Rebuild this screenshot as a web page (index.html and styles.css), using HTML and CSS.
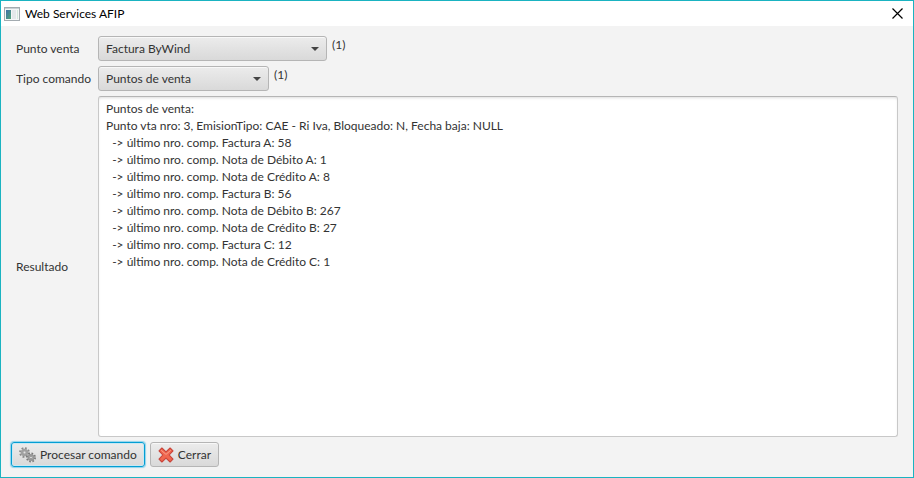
FILE: index.html
```
<!DOCTYPE html>
<html lang="es">
<head>
  <meta charset="UTF-8">
  <meta name="viewport" content="width=device-width, initial-scale=1.0">
  <title>Web Services AFIP</title>
  <link rel="stylesheet" href="styles.css">
</head>
<body>
  <div class="window">
    <header class="titlebar">
      <svg class="app-icon" width="16" height="14" viewBox="0 0 16 14">
        <defs>
          <linearGradient id="pane" x1="0" y1="0" x2="1" y2="1">
            <stop offset="0" stop-color="#3f6fa8"/>
            <stop offset="1" stop-color="#4fa578"/>
          </linearGradient>
        </defs>
        <rect x="0.5" y="0.5" width="15" height="13" fill="#f4f6f7" stroke="#a3abb0"/>
        <rect x="1" y="1" width="14" height="1" fill="#c9d0d4"/>
        <rect x="2" y="3" width="5" height="9" fill="url(#pane)"/>
        <rect x="8" y="3" width="4" height="9" fill="#e3e8ea"/>
        <rect x="13" y="3" width="1" height="9" fill="#d3e8dc"/>
      </svg>
      <h1 class="title">Web Services AFIP</h1>
      <button class="close" type="button" aria-label="Cerrar ventana">
        <svg width="11" height="11" viewBox="0 0 11 11">
          <path d="M0.5 0.5L10.5 10.5M10.5 0.5L0.5 10.5" stroke="#000" stroke-width="1.2"/>
        </svg>
      </button>
    </header>

    <form class="content">
      <div class="fields">
        <label for="puntoVenta">Punto venta</label>
        <div class="field">
          <div class="combo combo-wide">
            <select id="puntoVenta">
              <option>Factura ByWind</option>
            </select>
          </div>
          <span class="count">(1)</span>
        </div>

        <label for="tipoComando">Tipo comando</label>
        <div class="field">
          <div class="combo">
            <select id="tipoComando">
              <option>Puntos de venta</option>
            </select>
          </div>
          <span class="count">(1)</span>
        </div>

        <label for="resultado">Resultado</label>
        <textarea id="resultado" class="result" spellcheck="false">Puntos de venta:
Punto vta nro: 3, EmisionTipo: CAE - Ri Iva, Bloqueado: N, Fecha baja: NULL
  -&gt; último nro. comp. Factura A: 58
  -&gt; último nro. comp. Nota de Débito A: 1
  -&gt; último nro. comp. Nota de Crédito A: 8
  -&gt; último nro. comp. Factura B: 56
  -&gt; último nro. comp. Nota de Débito B: 267
  -&gt; último nro. comp. Nota de Crédito B: 27
  -&gt; último nro. comp. Factura C: 12
  -&gt; último nro. comp. Nota de Crédito C: 1</textarea>
      </div>

      <div class="actions">
        <button class="btn btn-default" type="button">
          <svg width="17" height="16" viewBox="0 0 17 16" fill="none">
            <circle cx="5.5" cy="5.5" r="4.4" stroke="#8a8a8a" stroke-width="2" stroke-dasharray="1.8 1.65"/>
            <circle cx="5.5" cy="5.5" r="2.8" stroke="#a0a0a0" stroke-width="2"/>
            <circle cx="5.5" cy="5.5" r="1.4" fill="#e2e2e2" stroke="#777" stroke-width="0.6"/>
            <circle cx="12" cy="10.5" r="4" stroke="#787878" stroke-width="2" stroke-dasharray="1.6 1.54"/>
            <circle cx="12" cy="10.5" r="2.6" stroke="#969696" stroke-width="1.8"/>
            <circle cx="12" cy="10.5" r="1.3" fill="#e2e2e2" stroke="#6c6c6c" stroke-width="0.6"/>
          </svg>
          Procesar comando
        </button>
        <button class="btn" type="button">
          <svg width="16" height="16" viewBox="0 0 16 16">
            <path d="M3.9 1L8 4.8L12.1 1L15 3.9L11.2 8L15 12.1L12.1 15L8 11.2L3.9 15L1 12.1L4.8 8L1 3.9Z" fill="#f0674f" stroke="#c8443a" stroke-width="1.1" stroke-linejoin="round"/>
            <path d="M3.2 3.2L8 7.4L12.8 3.2" fill="none" stroke="#f9a08c" stroke-width="1"/>
          </svg>
          Cerrar
        </button>
      </div>
    </form>
  </div>
</body>
</html>
```
FILE: styles.css
```
* {
  box-sizing: border-box;
}
body {
  margin: 0;
  font-family: Lato, "Open Sans", sans-serif;
  font-size: 12px;
  line-height: 17px;
  color: #333;
}
select,
textarea,
button {
  font: inherit;
  color: inherit;
}
.window {
  display: flex;
  flex-direction: column;
  min-height: 100vh;
  border: 1px solid #1ab3c1;
  background-color: #f3f3f3;
}
.titlebar {
  display: flex;
  align-items: center;
  gap: 5px;
  height: 25px;
  padding: 0 10px 0 3px;
  background-color: #fff;
  color: #000;
}
.app-icon {
  flex: none;
}
.title {
  flex: 1;
  margin: 0;
  font-size: 12px;
  font-weight: normal;
}
.close {
  display: flex;
  padding: 0;
  border: 0;
  background: none;
}
.content {
  flex: 1;
  display: flex;
  flex-direction: column;
  gap: 5px;
  padding: 10px;
}
.fields {
  flex: 1;
  display: grid;
  grid-template-columns: 77px 1fr;
  grid-template-rows: auto auto 1fr;
  gap: 5px;
  align-items: center;
  padding: 0 5px;
}
.fields label {
  white-space: nowrap;
}
.field {
  display: flex;
  align-items: flex-start;
  gap: 5px;
}
.combo {
  position: relative;
  width: 171px;
}
.combo-wide {
  width: 229px;
}
.combo::after {
  content: "";
  position: absolute;
  top: 11px;
  right: 8px;
  border: 4px solid transparent;
  border-top-color: #444;
  border-bottom: 0;
  pointer-events: none;
}
.combo select {
  appearance: none;
  display: block;
  width: 100%;
  height: 25px;
  padding: 0 24px 0 7px;
}
.combo select,
.btn {
  border: 1px solid #b5b5b5;
  border-radius: 3px;
  background: linear-gradient(#ececec, #d9d9d9);
  box-shadow: inset 0 1px #f8f8f8;
}
.result {
  display: block;
  width: 100%;
  height: 100%;
  padding: 3px 7px;
  border: 1px solid #c8c8c8;
  border-top-color: #b5b5b5;
  border-radius: 3px;
  background-color: #fff;
  box-shadow: inset 0 2px 3px -1px #ddd;
  resize: none;
  outline: none;
}
.actions {
  display: flex;
  gap: 5px;
}
.btn {
  display: flex;
  align-items: center;
  gap: 4px;
  height: 25px;
  padding: 0 7px;
  white-space: nowrap;
}
.btn-default {
  border-color: #039ed3;
  box-shadow: 0 0 1px 1px #8fd3ec, inset 0 0 0 1px #c9e8f3;
}
```
